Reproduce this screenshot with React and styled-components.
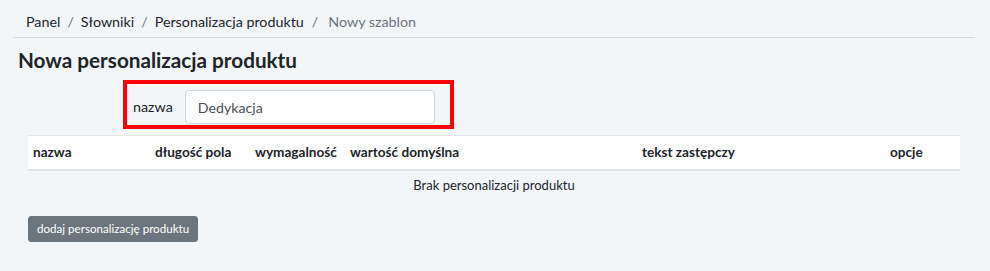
import React from "react";
import styled, { createGlobalStyle } from "styled-components";

const Global = createGlobalStyle`
  html, body { margin: 0; padding: 0; background: #f3f6f9; }
  body { font-family: "Lato", "Noto Sans", sans-serif; color: #212529; }
  * { box-sizing: border-box; }
`;

const Page = styled.div`
  width: 990px;
  height: 271px;
  background: #f3f6f9;
  padding: 0 15px 0 13px;
`;

const Breadcrumb = styled.nav`
  display: flex;
  align-items: center;
  height: 38px;
  padding: 5px 0 0 13px;
  border-bottom: 1px solid #d4d8dc;
  font-size: 14.3px;
`;

const Crumb = styled.span`
  color: ${(p) => (p.$active ? "#6c757d" : "#212529")};
`;

const Sep = styled.span`
  color: #6c757d;
  padding: ${(p) => (p.$wide ? "0 10px 0 8px" : "0 7px")};
`;

const Title = styled.h1`
  margin: 0;
  padding: 10px 0 0 5px;
  font-size: 20.7px;
  font-weight: 700;
  line-height: 24px;
  height: 42px;
`;

const FormRow = styled.div`
  display: flex;
  align-items: flex-end;
  margin-left: 110px;
  width: fit-content;
  height: 49px;
  border: 4px solid #ff0000;
  padding: 0 15px 1px 6px;
  gap: 12px;
`;

const Label = styled.label`
  font-size: 14.3px;
  line-height: 34px;
`;

const Input = styled.input`
  width: 250px;
  height: 34px;
  border: 1px solid #ced4da;
  border-radius: 4px;
  background: #fff;
  padding: 0 12px;
  font: inherit;
  font-size: 14.2px;
  color: #495057;
  outline: none;
`;

const Table = styled.table`
  margin: 6px 0 0 15px;
  width: 932px;
  border-collapse: collapse;
  table-layout: fixed;
  font-size: 13px;
`;

const Th = styled.th`
  text-align: left;
  background: #fff;
  font-weight: 700;
  font-size: 13.6px;
  height: 34px;
  padding: 0 5px;
  border-top: 1px solid #e3e6ea;
  border-bottom: 2px solid #dee2e6;
  white-space: nowrap;
`;

const Td = styled.td`
  text-align: center;
  height: 29px;
  padding: 0 5px;
`;

const Button = styled.button`
  margin: 17px 0 0 15px;
  height: 26px;
  padding: 0 8px;
  background: #6c757d;
  color: #fff;
  border: 1px solid #6c757d;
  border-radius: 3px;
  font: inherit;
  font-size: 11.6px;
`;

const cols = [
  ["nazwa", 122],
  ["długość pola", 100],
  ["wymagalność", 95],
  ["wartość domyślna", 292],
  ["tekst zastępczy", 248],
  ["opcje", 75],
];

export default function App() {
  return (
    <Page>
      <Global />
      <Breadcrumb>
        <Crumb>Panel</Crumb>
        <Sep>/</Sep>
        <Crumb>Słowniki</Crumb>
        <Sep>/</Sep>
        <Crumb>Personalizacja produktu</Crumb>
        <Sep $wide>/</Sep>
        <Crumb $active>Nowy szablon</Crumb>
      </Breadcrumb>
      <Title>Nowa personalizacja produktu</Title>
      <FormRow>
        <Label>nazwa</Label>
        <Input defaultValue="Dedykacja" />
      </FormRow>
      <Table>
        <colgroup>
          {cols.map(([n, w]) => (
            <col key={n} style={{ width: w }} />
          ))}
        </colgroup>
        <thead>
          <tr>
            {cols.map(([n]) => (
              <Th key={n}>{n}</Th>
            ))}
          </tr>
        </thead>
        <tbody>
          <tr>
            <Td colSpan={6}>Brak personalizacji produktu</Td>
          </tr>
        </tbody>
      </Table>
      <Button>dodaj personalizację produktu</Button>
    </Page>
  );
}
